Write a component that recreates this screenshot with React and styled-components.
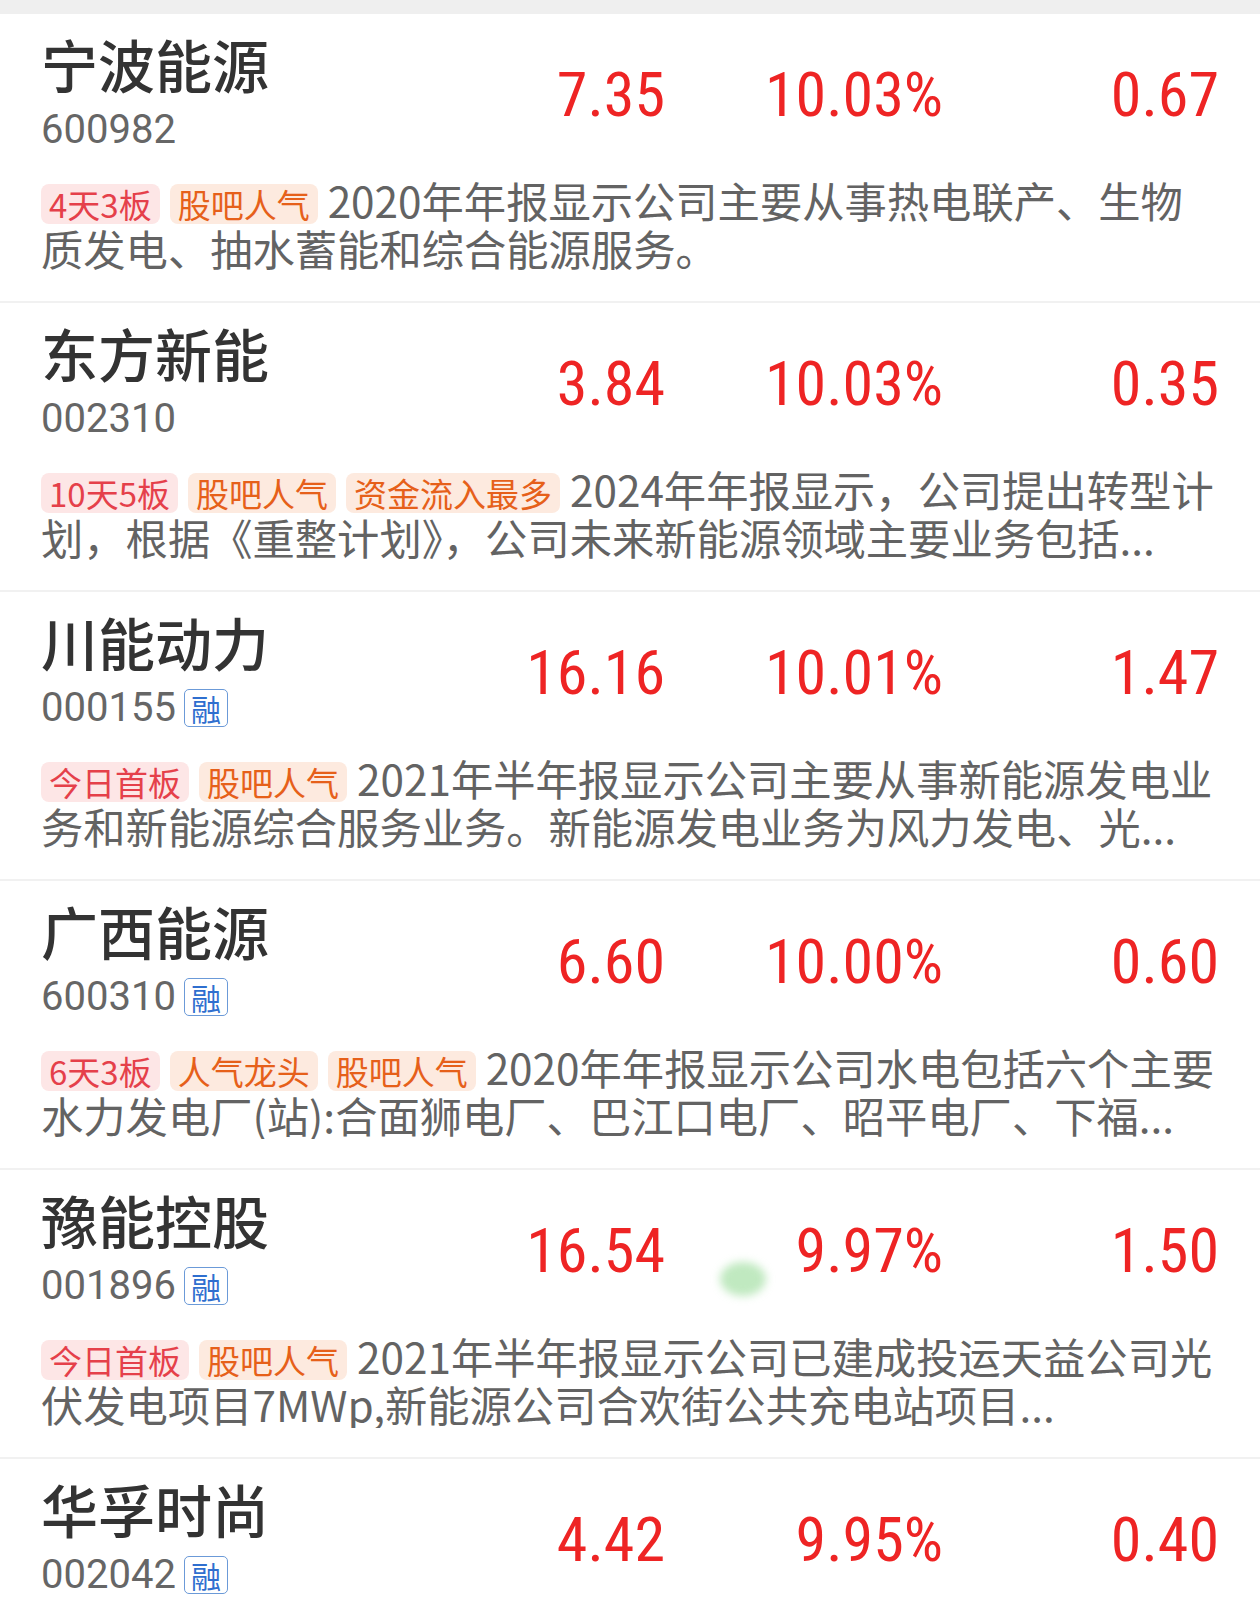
import React from 'react'
import styled, { createGlobalStyle } from 'styled-components'

const GlobalStyle = createGlobalStyle`
  body {
    margin: 0;
    background: #fff;
    font-family: "Noto Sans CJK SC", "Noto Sans", sans-serif;
  }
`;

const stocks = [
  {
    name: '宁波能源', code: '600982', rong: false,
    price: '7.35', pct: '10.03%', chg: '0.67',
    tags: [['4天3板', 'red'], ['股吧人气', 'orange']],
    desc: '2020年年报显示公司主要从事热电联产、生物质发电、抽水蓄能和综合能源服务。',
  },
  {
    name: '东方新能', code: '002310', rong: false,
    price: '3.84', pct: '10.03%', chg: '0.35',
    tags: [['10天5板', 'red'], ['股吧人气', 'orange'], ['资金流入最多', 'orange']],
    desc: '2024年年报显示，公司提出转型计划，根据《重整计划》，公司未来新能源领域主要业务包括...',
  },
  {
    name: '川能动力', code: '000155', rong: true,
    price: '16.16', pct: '10.01%', chg: '1.47',
    tags: [['今日首板', 'red'], ['股吧人气', 'orange']],
    desc: '2021年半年报显示公司主要从事新能源发电业务和新能源综合服务业务。新能源发电业务为风力发电、光...',
  },
  {
    name: '广西能源', code: '600310', rong: true,
    price: '6.60', pct: '10.00%', chg: '0.60',
    tags: [['6天3板', 'red'], ['人气龙头', 'orange'], ['股吧人气', 'orange']],
    desc: '2020年年报显示公司水电包括六个主要水力发电厂(站):合面狮电厂、巴江口电厂、昭平电厂、下福...',
  },
  {
    name: '豫能控股', code: '001896', rong: true,
    price: '16.54', pct: '9.97%', chg: '1.50',
    tags: [['今日首板', 'red'], ['股吧人气', 'orange']],
    desc: '2021年半年报显示公司已建成投运天益公司光伏发电项目7MWp,新能源公司合欢街公共充电站项目...',
    ripple: true,
  },
  {
    name: '华孚时尚', code: '002042', rong: true,
    price: '4.42', pct: '9.95%', chg: '0.40',
    tags: [['今日首板', 'red'], ['股吧人气', 'orange']],
    desc: '2021年半年报显示公司主要从事色纺纱线的生产与销售，同时提供网链服务...',
  },
];

export default function App() {
  return (
    <Page>
      <GlobalStyle />
      <TopBand />
      {stocks.map((s) => (
        <Row key={s.code}>
          <Top>
            <Left>
              <Name>{s.name}</Name>
              <CodeLine>
                <Code>{s.code}</Code>
                {s.rong && <Badge>融</Badge>}
              </CodeLine>
            </Left>
            <Num>{s.price}</Num>
            <Num>{s.pct}</Num>
            <Num>{s.chg}</Num>
          </Top>
          <Desc>
            {s.tags.map(([t, tone]) => (
              <Tag key={t} $tone={tone}>{t}</Tag>
            ))}
            {s.desc}
          </Desc>
          {s.ripple && <Ripple />}
        </Row>
      ))}
    </Page>
  )
}

const Page = styled.div`
  width: 1260px;
  background: #fff;
`;

const TopBand = styled.div`
  height: 14px;
  background: #efefef;
`;

const Row = styled.div`
  position: relative;
  padding: 18px 41px 29px;
  border-bottom: 2px solid #f1f1f1;
`;

const Top = styled.div`
  display: grid;
  grid-template-columns: 1fr 240px 278px 276px;
  align-items: center;
`;

const Left = styled.div`
  display: flex;
  flex-direction: column;
`;

const Name = styled.div`
  font-size: 57px;
  line-height: 62px;
  font-weight: 500;
  color: #333;
`;

const CodeLine = styled.div`
  display: flex;
  align-items: center;
  gap: 8px;
  margin-top: 14px;
`;

const Code = styled.span`
  font-family: Roboto, "Noto Sans", sans-serif;
  font-size: 40px;
  line-height: 44px;
  color: #666;
`;

const Badge = styled.span`
  box-sizing: border-box;
  display: flex;
  align-items: center;
  justify-content: center;
  width: 44px;
  height: 38px;
  border: 1.5px solid #6b9ad8;
  border-radius: 5px;
  color: #2f6fcf;
  font-size: 30px;
  line-height: 1;
`;

const Num = styled.div`
  padding-top: 5px;
  font-family: Roboto, "Noto Sans", sans-serif;
  font-stretch: 86%;
  font-weight: 430;
  font-size: 62px;
  line-height: 70px;
  color: #ee2424;
  text-align: right;
`;

const Desc = styled.div`
  margin-top: 24px;
  font-size: 42.3px;
  line-height: 48px;
  color: #636363;
  display: -webkit-box;
  -webkit-box-orient: vertical;
  -webkit-line-clamp: 2;
  overflow: hidden;
`;

const Tag = styled.span`
  display: inline-block;
  margin: 0 10px -3px 0;
  padding: 0 8px;
  height: 40px;
  line-height: 40px;
  font-size: 33px;
  border-radius: 8px;
  color: ${(p) => (p.$tone === 'red' ? '#e5404a' : '#e6601a')};
  background: ${(p) => (p.$tone === 'red' ? '#fde6e6' : '#fdeadf')};
`;

const Ripple = styled.div`
  position: absolute;
  left: 720px;
  top: 92px;
  width: 46px;
  height: 34px;
  border-radius: 50%;
  background: rgba(140, 215, 140, 0.55);
  filter: blur(4px);
`;
